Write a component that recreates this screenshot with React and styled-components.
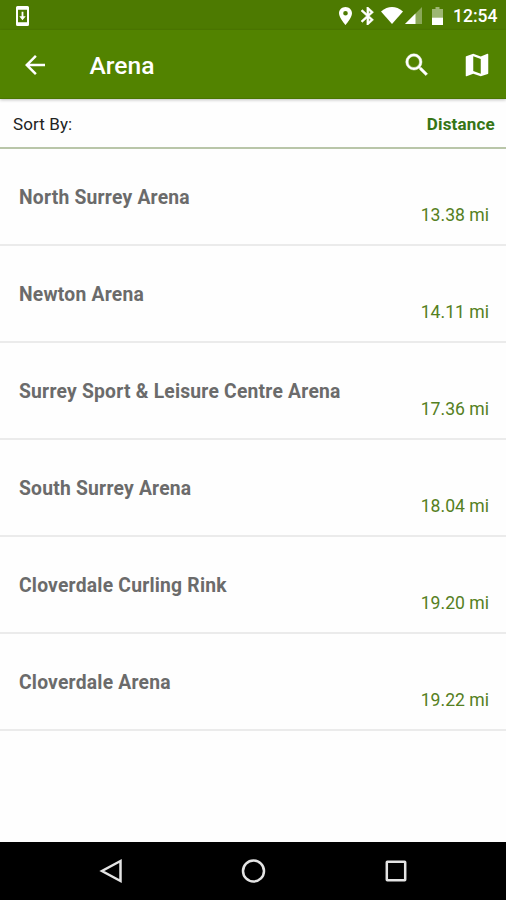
import React from 'react';
import styled, { createGlobalStyle } from 'styled-components';

const GlobalStyle = createGlobalStyle`
  * { box-sizing: border-box; }
  body { margin: 0; background: #fff; font-family: Roboto, sans-serif; }
  svg { display: block; }
`;

const Screen = styled.div`
  width: 506px;
  height: 900px;
  display: flex;
  flex-direction: column;
  background: #fefefe;
  overflow: hidden;
`;

const StatusBar = styled.div`
  height: 30px;
  flex: none;
  display: flex;
  align-items: center;
  padding: 1px 9px 0 16px;
  background: #4d7a01;
  color: #fff;
`;

const StatusIcons = styled.div`
  display: flex;
  align-items: center;
  margin-left: auto;
`;

const StatusIcon = styled.svg`
  width: ${(p) => p.$w}px;
  height: ${(p) => p.$h}px;
  margin-right: ${(p) => p.$gap || 0}px;
  fill: #fff;
`;

const Clock = styled.span`
  width: 44px;
  padding-top: 1px;
  font-size: 17.5px;
  font-weight: 500;
  line-height: 28px;
  white-space: nowrap;
`;

const AppBar = styled.header`
  height: 69px;
  flex: none;
  display: flex;
  align-items: center;
  padding: 1px 14px 0 20px;
  background: #528300;
  color: #fff;
  border-bottom: 1px solid #4a7600;
  box-shadow: 0 1px 3px rgba(0, 0, 0, 0.25);
  z-index: 1;
`;

const IconButton = styled.button`
  width: 30px;
  height: 30px;
  padding: 0;
  border: 0;
  background: none;
  margin-left: ${(p) => p.$gap || 0}px;

  svg { width: 30px; height: 30px; fill: #fff; }
`;

const Title = styled.h1`
  flex: 1;
  margin: 3px 0 0 39.5px;
  font-size: 24.6px;
  font-weight: 500;
  line-height: 32px;
`;

const SortBar = styled.div`
  height: 50px;
  flex: none;
  display: flex;
  align-items: center;
  justify-content: space-between;
  padding: 2px 11px 0 13px;
  border-bottom: 2px solid #b9c6a9;
  font-size: 17px;
  line-height: 24px;
`;

const SortLabel = styled.span`
  color: #222;
  letter-spacing: 0.1px;
`;

const SortValue = styled.span`
  color: #367516;
  font-weight: 700;
  letter-spacing: 0.2px;
`;

const List = styled.ul`
  flex: 1;
  margin: 0;
  padding: 0;
  list-style: none;
`;

const Row = styled.li`
  height: 97px;
  display: flex;
  justify-content: space-between;
  padding: 34px 17px 0 19px;
  border-bottom: 2px solid #ebebeb;
`;

const Name = styled.span`
  margin-top: 1px;
  color: #6b6b6b;
  font-size: 19.3px;
  font-weight: 700;
  letter-spacing: 0.22px;
  line-height: 28px;
`;

const Distance = styled.span`
  margin-top: 18px;
  color: #558022;
  font-size: 17.6px;
  line-height: 28px;
`;

const NavBar = styled.nav`
  height: 58px;
  flex: none;
  display: flex;
  align-items: center;
  justify-content: space-between;
  padding: 0 96px 0 97px;
  background: #000;
`;

const NavButton = styled.button`
  width: 28px;
  height: 28px;
  padding: 0;
  border: 0;
  background: none;

  svg { width: 28px; height: 28px; fill: none; stroke: #e4e4e4; stroke-width: 2.5; }
`;

const arenas = [
  ['North Surrey Arena', '13.38 mi'],
  ['Newton Arena', '14.11 mi'],
  ['Surrey Sport & Leisure Centre Arena', '17.36 mi'],
  ['South Surrey Arena', '18.04 mi'],
  ['Cloverdale Curling Rink', '19.20 mi'],
  ['Cloverdale Arena', '19.22 mi'],
];

export default function App() {
  return (
    <>
      <GlobalStyle />
      <Screen>
        <StatusBar>
          <StatusIcon $w={13} $h={20} viewBox="0 0 13 19" preserveAspectRatio="none">
            <path fillRule="evenodd" d="M1.5 0h10Q13 0 13 1.5v16q0 1.500-1.500 1.500h-10Q0 19 0 17.500v-16Q0 0 1.500 0zM2 3.500v12h9v-12zM5.600 5.500h1.800v4.300h2.300L6.500 13.500 3.300 9.800h2.300z" />
          </StatusIcon>
          <StatusIcons>
            <StatusIcon $w={13} $h={18} $gap={9} viewBox="5 2 14 20" preserveAspectRatio="none">
              <path d="M12 2C8.130 2 5 5.130 5 9c0 5.250 7 13 7 13s7-7.750 7-13c0-3.870-3.130-7-7-7zm0 9.500a2.500 2.500 0 0 1 0-5 2.500 2.500 0 0 1 0 5z" />
            </StatusIcon>
            <StatusIcon $w={13} $h={18} $gap={7} viewBox="5 2 13.200 20" preserveAspectRatio="none">
              <path stroke="#fff" strokeWidth=".6" d="M17.710 7.710 12 2h-1v7.590L6.410 5 5 6.410 10.590 12 5 17.590 6.410 19 11 14.410V22h1l5.710-5.710-4.300-4.290 4.300-4.290zM13 5.830l1.880 1.880L13 9.590V5.830zm1.880 10.460L13 18.170v-3.760l1.880 1.880z" />
            </StatusIcon>
            <StatusIcon $w={22} $h={17} $gap={2} viewBox="0 0 22 17">
              <path d="M0 4.500Q11-4.300 22 4.500L11 17z" />
            </StatusIcon>
            <StatusIcon $w={17} $h={17} $gap={10} viewBox="0 0 17 17">
              <path opacity=".35" d="M17 0v17H0z" />
              <path d="M10.500 6.500V17H0z" />
            </StatusIcon>
            <StatusIcon $w={11} $h={18} $gap={10} viewBox="0 0 11 18">
              <path opacity=".45" d="M3.500 0h4v2H11v8.500H0V2h3.500z" />
              <path d="M0 10.500h11V18H0z" />
            </StatusIcon>
            <Clock>12:54</Clock>
          </StatusIcons>
        </StatusBar>
        <AppBar>
          <IconButton aria-label="Back">
            <svg viewBox="0 0 24 24"><path d="M20 11H7.830l5.590-5.590L12 4l-8 8 8 8 1.410-1.410L7.830 13H20v-2z" /></svg>
          </IconButton>
          <Title>Arena</Title>
          <IconButton aria-label="Search">
            <svg viewBox="0 0 24 24"><path stroke="#fff" strokeWidth=".35" d="M15.500 14h-.79l-.28-.27A6.471 6.471 0 0 0 16 9.500 6.500 6.500 0 1 0 9.500 16c1.610 0 3.090-.59 4.230-1.570l.27.28v.79l5 4.990L20.490 19l-4.990-5zm-6 0C7.010 14 5 11.990 5 9.500S7.010 5 9.500 5 14 7.010 14 9.500 11.990 14 9.500 14z" /></svg>
          </IconButton>
          <IconButton aria-label="Map" $gap={30}>
            <svg viewBox="0 0 24 24"><path d="m20.500 3-.16.030L15 5.100 9 3 3.360 4.900c-.21.070-.36.250-.36.480V20.500c0 .28.220.5.500.5l.16-.030L9 18.900l6 2.100 5.640-1.900c.21-.070.360-.250.360-.480V3.500c0-.28-.22-.5-.5-.5zM15 19l-6-2.110V5l6 2.110V19z" /></svg>
          </IconButton>
        </AppBar>
        <SortBar>
          <SortLabel>Sort By:</SortLabel>
          <SortValue>Distance</SortValue>
        </SortBar>
        <List>
          {arenas.map(([name, distance]) => (
            <Row key={name}>
              <Name>{name}</Name>
              <Distance>{distance}</Distance>
            </Row>
          ))}
        </List>
        <NavBar>
          <NavButton aria-label="Back">
            <svg viewBox="0 0 28 28"><path d="M23.500 4v20L5 14z" /></svg>
          </NavButton>
          <NavButton aria-label="Home">
            <svg viewBox="0 0 28 28"><circle cx="13.500" cy="14" r="10.500" /></svg>
          </NavButton>
          <NavButton aria-label="Recent apps">
            <svg viewBox="0 0 28 28"><rect x="4.800" y="4.800" width="18.400" height="18.400" rx=".5" /></svg>
          </NavButton>
        </NavBar>
      </Screen>
    </>
  );
}
